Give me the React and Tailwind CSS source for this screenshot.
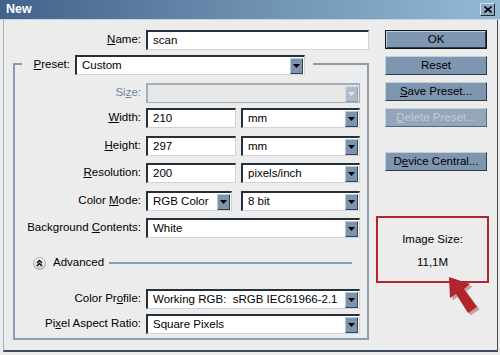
import React from 'react';

const DropArrow = ({ disabled }) => (
  <span
    className={`flex items-center justify-center w-[13px] h-[16px] border ${
      disabled
        ? 'bg-[#aebdcc] border-t-[#d4dce5] border-l-[#d4dce5] border-r-[#8f9fb0] border-b-[#8f9fb0]'
        : 'bg-[#7d94ae] border-t-[#bccad8] border-l-[#bccad8] border-r-[#34424f] border-b-[#34424f]'
    }`}
  >
    <svg width="7" height="4" viewBox="0 0 7 4">
      <path d="M0 0h7L3.5 4z" fill={disabled ? '#dfe5ec' : '#000'} />
    </svg>
  </span>
);

const Field = ({ value, w, select, disabled }) => (
  <div
    className={`flex items-center h-[20px] pl-[5px] pr-[1px] border-t-2 border-l-2 border-r border-b ${w} ${
      disabled
        ? 'bg-[#e7e7e7] border-[#a3afbb]'
        : 'bg-white border-t-[#26303b] border-l-[#26303b] border-r-[#cdd3d9] border-b-[#cdd3d9]'
    }`}
  >
    <span className="flex-1 whitespace-pre overflow-hidden">{value}</span>
    {select && <DropArrow disabled={disabled} />}
  </div>
);

const Label = ({ children, disabled }) => (
  <span className={`w-[131px] pr-[5px] text-right whitespace-nowrap ${disabled ? 'text-[#6f84a3]' : 'text-black'}`}>
    {children}
  </span>
);

const Button = ({ children, primary, disabled, className = '' }) => (
  <div
    className={`h-[19px] w-[102px] flex items-center justify-center ${className} ${
      primary ? 'border border-[#0e161e]' : ''
    }`}
  >
    <div
      className={`w-full h-full flex items-center justify-center border ${
        disabled
          ? 'bg-[#93a6bc] text-[#c3ccd7] border-t-[#c7d2de] border-l-[#c7d2de] border-r-[#55677a] border-b-[#55677a]'
          : 'bg-[#7f96b0] text-black border-t-[#c2cedb] border-l-[#c2cedb] border-r-[#2e3b49] border-b-[#2e3b49]'
      }`}
    >
      {children}
    </div>
  </div>
);

export default function App() {
  return (
    <div className="w-[500px] h-[355px] bg-[#ececec] flex flex-col relative overflow-hidden font-['Liberation_Sans',Arial,sans-serif] text-[11.5px] leading-none">
      {/* title bar */}
      <div className="h-[20px] flex items-center justify-between bg-linear-to-r from-[#43628a] via-[#6d90b0] to-[#92bad5] pl-[6px] pr-[5px] border-b border-[#c9d3dc]">
        <span className="text-white font-bold text-[12.5px]">New</span>
        <div className="w-[15px] h-[13px] flex items-center justify-center bg-[#8fa9c2] border border-t-[#d8e3ec] border-l-[#d8e3ec] border-r-[#1f2a35] border-b-[#1f2a35]">
          <svg width="8" height="7" viewBox="0 0 8 7">
            <path d="M0.5 0.5L7.5 6.5M7.5 0.5L0.5 6.5" stroke="#000" strokeWidth="1.6" />
          </svg>
        </div>
      </div>

      {/* body */}
      <div className="flex-1 ml-[3px] mr-[2px] mb-[3px] border-l border-[#a5b2bf] border-r border-r-[#3d4c5c] border-b-2 border-b-[#3d4c5c] flex pt-[10px] pl-[9px]">
        {/* left column */}
        <div className="w-[356px] flex flex-col">
          <div className="flex items-center">
            <span className="w-[128px] text-right pr-0">
              <u>N</u>ame:
            </span>
            <div className="ml-[5px]">
              <Field value="scan" w="w-[223px]" />
            </div>
          </div>

          <div className="mt-[13px] border-2 border-[#8a9db2] flex flex-col pb-[4px]">
            {/* preset legend */}
            <div className="-mt-[10px] ml-[7px] self-start bg-[#ececec] pl-[8px] pr-[8px] flex items-center">
              <span className="w-[45px] pr-[5px] text-right">
                <u>P</u>reset:
              </span>
              <Field value="Custom" w="w-[230px]" select />
            </div>

            <div className="mt-[8px] flex items-center">
              <Label disabled>
                Si<u>z</u>e:
              </Label>
              <Field value="" w="w-[214px]" select disabled />
            </div>

            <div className="mt-[5px] flex items-center">
              <Label>
                <u>W</u>idth:
              </Label>
              <Field value="210" w="w-[90px]" />
              <div className="ml-[5px]">
                <Field value="mm" w="w-[119px]" select />
              </div>
            </div>

            <div className="mt-[8px] flex items-center">
              <Label>
                <u>H</u>eight:
              </Label>
              <Field value="297" w="w-[90px]" />
              <div className="ml-[5px]">
                <Field value="mm" w="w-[119px]" select />
              </div>
            </div>

            <div className="mt-[7px] flex items-center">
              <Label>
                <u>R</u>esolution:
              </Label>
              <Field value="200" w="w-[90px]" />
              <div className="ml-[5px]">
                <Field value="pixels/inch" w="w-[119px]" select />
              </div>
            </div>

            <div className="mt-[8px] flex items-center">
              <Label>
                Color <u>M</u>ode:
              </Label>
              <Field value="RGB Color" w="w-[86px]" select />
              <div className="ml-[9px]">
                <Field value="8 bit" w="w-[119px]" select />
              </div>
            </div>

            <div className="mt-[7px] flex items-center">
              <Label>
                Background <u>C</u>ontents:
              </Label>
              <Field value="White" w="w-[214px]" select />
            </div>

            <div className="mt-[15px] h-[20px] flex items-center pl-[18px] mr-[15px]">
              <svg width="13" height="13" viewBox="0 0 13 13">
                <defs>
                  <linearGradient id="adv" x1="0" y1="0" x2="0" y2="1">
                    <stop offset="0" stopColor="#ffffff" />
                    <stop offset="1" stopColor="#c9c9c9" />
                  </linearGradient>
                </defs>
                <circle cx="6.5" cy="6.5" r="6" fill="url(#adv)" stroke="#a9a9a9" />
                <path d="M4 6L6.5 3.5L9 6M4 9L6.5 6.5L9 9" fill="none" stroke="#000" strokeWidth="1.3" />
              </svg>
              <span className="ml-[7px]">Advanced</span>
              <div className="ml-[5px] flex-1 h-[2px] bg-[#8a9db2]" />
            </div>

            <div className="mt-[16px] flex items-center">
              <Label>
                Color Pr<u>o</u>file:
              </Label>
              <Field value="Working RGB:  sRGB IEC61966-2.1" w="w-[214px]" select />
            </div>

            <div className="mt-[5px] flex items-center">
              <Label>
                Pi<u>x</u>el Aspect Ratio:
              </Label>
              <Field value="Square Pixels" w="w-[214px]" select />
            </div>
          </div>
        </div>

        {/* right column */}
        <div className="ml-[16px] flex flex-col">
          <Button primary>OK</Button>
          <Button className="mt-[7px]">Reset</Button>
          <Button className="mt-[7px]">
            <span>
              <u>S</u>ave Preset...
            </span>
          </Button>
          <Button className="mt-[7px]" disabled>
            <span>
              <u>D</u>elete Preset...
            </span>
          </Button>
          <Button className="mt-[25px]">
            <span>
              D<u>e</u>vice Central...
            </span>
          </Button>

          <div className="mt-[45px] -ml-[9px] w-[113px] h-[67px] border-2 border-[#b3262a] flex flex-col items-center pt-[16px]">
            <span>Image Size:</span>
            <span className="mt-[11px]">11,1M</span>
          </div>
        </div>
      </div>

      {/* annotation arrow */}
      <svg className="absolute left-[440px] top-[270px]" width="45" height="50" viewBox="0 0 45 50">
        <polygon points="10,8 31,15 25,20 38,38 29,44 17,25 11,29" fill="#7a1a1c" opacity="0.35" transform="translate(1.5,1.5)" />
        <polygon points="9,7 30,14 24,19 37,37 28,43 16,24 10,28" fill="#b0262a" />
      </svg>
    </div>
  );
}
